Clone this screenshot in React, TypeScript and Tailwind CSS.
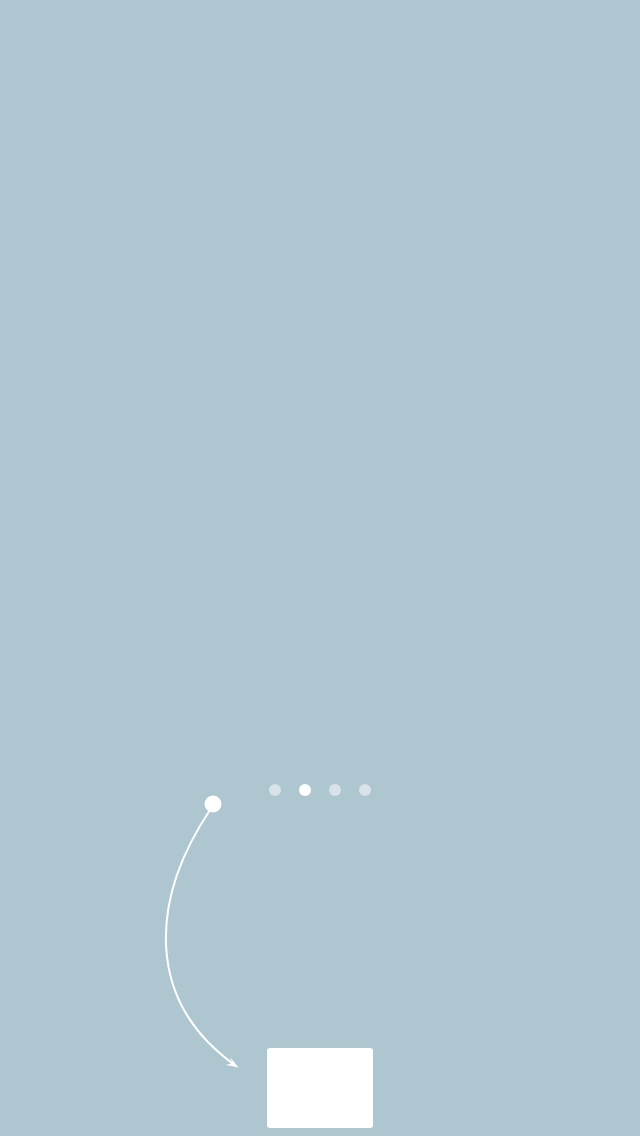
export default function App() {
  const dots = [false, true, false, false];

  return (
    <div className="relative h-[1136px] w-full overflow-hidden bg-[#aec6d0] flex flex-col items-center">
      <div className="flex-1" />

      {/* page indicator */}
      <div className="flex items-center gap-[18px]">
        {dots.map((active, i) => (
          <span
            key={i}
            className={`block h-3 w-3 rounded-full ${active ? "bg-white" : "bg-white/50"}`}
          />
        ))}
      </div>

      <div className="h-[252px]" />

      <div className="mb-2 h-20 w-[106px] rounded-[3px] bg-white" />

      {/* coach mark arrow */}
      <svg
        className="pointer-events-none absolute left-0 top-0"
        width="640"
        height="1136"
        viewBox="0 0 640 1136"
      >
        <circle cx="213" cy="804" r="8.5" fill="#fff" />
        <path
          d="M210 810 C150 900 145 1000 234 1064.5"
          fill="none"
          stroke="#fff"
          strokeWidth="2"
        />
        <path d="M238.5 1067.5 L230 1057 L232.5 1063 L226 1065 Z" fill="#fff" />
      </svg>
    </div>
  );
}
